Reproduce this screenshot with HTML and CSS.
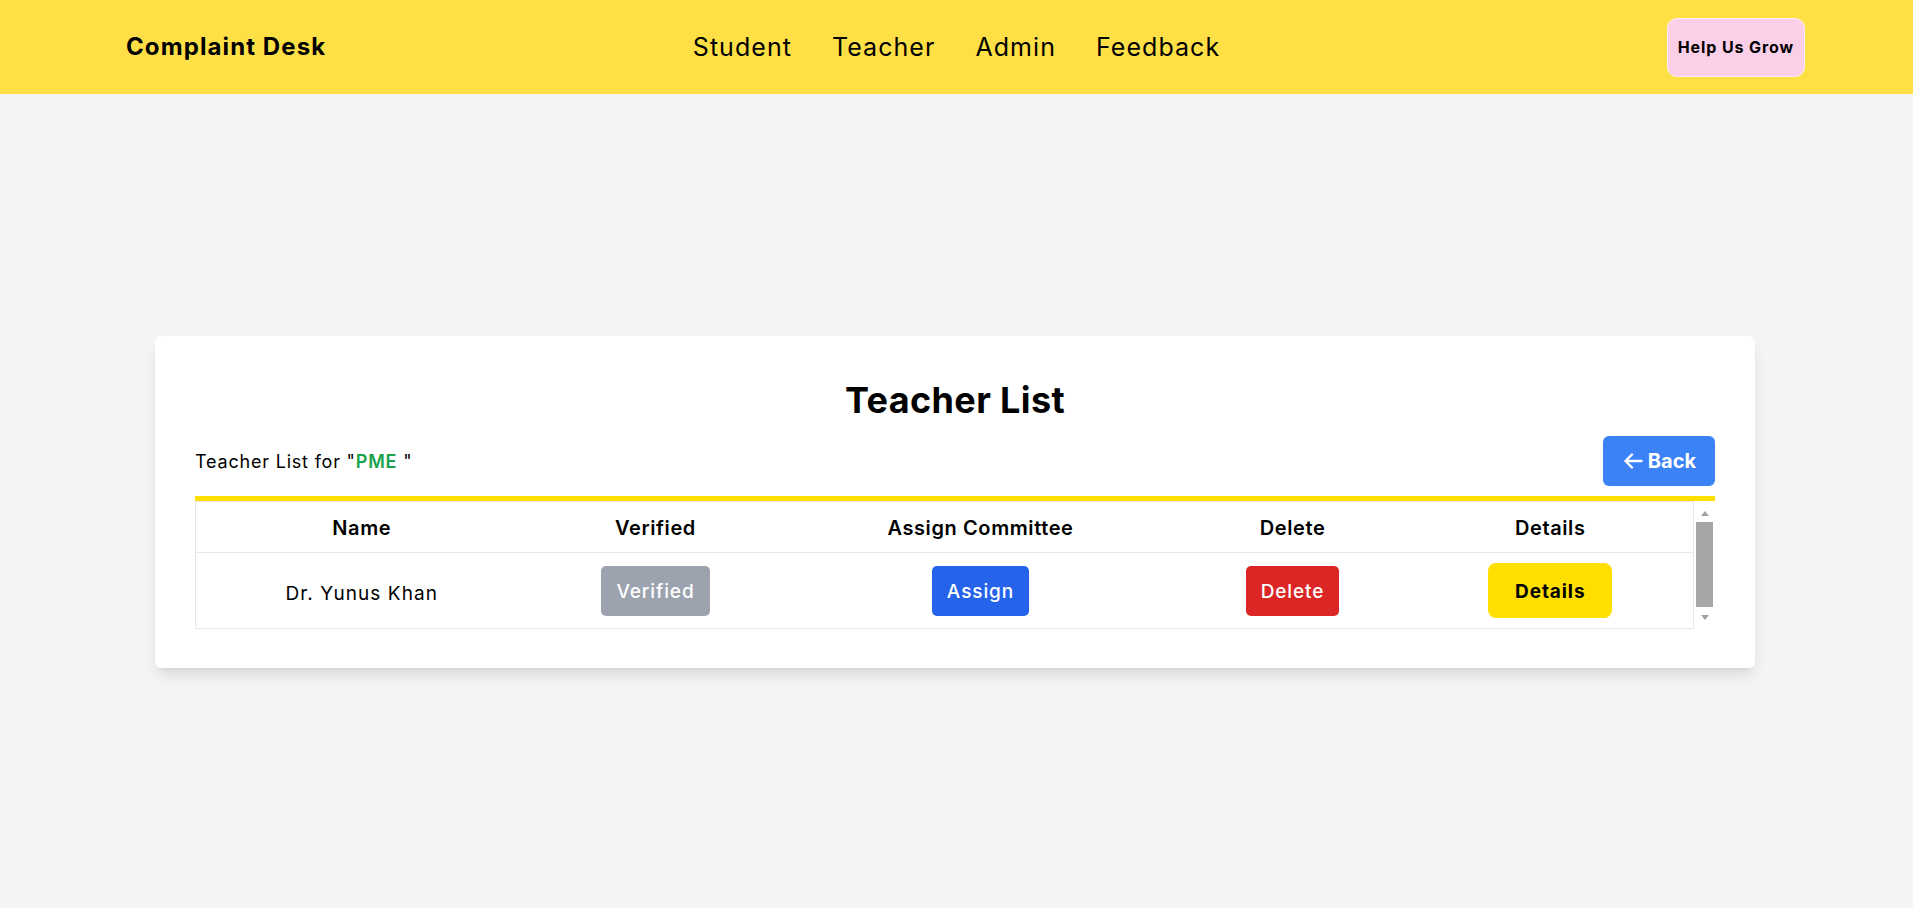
FILE: index.html
```html
<!DOCTYPE html>
<html lang="en">
<head>
<meta charset="utf-8">
<title>Complaint Desk</title>
<link rel="stylesheet" href="styles.css">
</head>
<body>
<header class="topbar">
  <div class="brand">Complaint Desk</div>
  <nav class="nav">
    <a class="nav-link" href="#">Student</a>
    <a class="nav-link" href="#">Teacher</a>
    <a class="nav-link" href="#">Admin</a>
    <a class="nav-link" href="#">Feedback</a>
  </nav>
  <div class="actions">
    <button class="grow-btn" type="button">Help Us Grow</button>
  </div>
</header>
<main class="page">
  <section class="card">
    <h1 class="card-title">Teacher List</h1>
    <div class="card-bar">
      <p class="subtitle">Teacher List for "<span class="dept">PME</span> "</p>
      <button class="back-btn" type="button">
        <svg class="back-icon" width="20" height="16" viewBox="0 0 20 16" aria-hidden="true"><path d="M9 1.5 L2.5 8 L9 14.5 M2.5 8 H18.5" fill="none" stroke="#fff" stroke-width="2.4" stroke-linecap="round" stroke-linejoin="round"/></svg>
        <span>Back</span>
      </button>
    </div>
    <div class="table-wrap">
      <div class="table-scroll">
        <table class="teacher-table">
          <thead>
            <tr>
              <th class="col-name">Name</th>
              <th class="col-verified">Verified</th>
              <th class="col-assign">Assign Committee</th>
              <th class="col-delete">Delete</th>
              <th class="col-details">Details</th>
            </tr>
          </thead>
          <tbody>
            <tr>
              <td class="cell-name">Dr. Yunus Khan</td>
              <td><button class="btn btn-gray" type="button">Verified</button></td>
              <td><button class="btn btn-blue" type="button">Assign</button></td>
              <td><button class="btn btn-red" type="button">Delete</button></td>
              <td><button class="btn-details" type="button">Details</button></td>
            </tr>
          </tbody>
        </table>
      </div>
      <div class="scrollbar" aria-hidden="true">
        <span class="sb-arrow sb-up"></span>
        <span class="sb-thumb"></span>
        <span class="sb-arrow sb-down"></span>
      </div>
    </div>
  </section>
</main>
</body>
</html>
```
FILE: styles.css
```css
* { box-sizing: border-box; }

html, body { margin: 0; padding: 0; }

body {
  background: #f3f4f6;
  font-family: Inter, "Noto Sans", "DejaVu Sans", sans-serif;
  color: #000;
  letter-spacing: 0.04em;
}

button { font-family: inherit; letter-spacing: inherit; cursor: pointer; }

/* ---------- top bar ---------- */
.topbar {
  height: 94px;
  background: #fee046;
  display: grid;
  grid-template-columns: 1fr auto 1fr;
  align-items: center;
  padding: 0 108px;
}

.brand {
  padding-left: 18px;
  font-size: 24px;
  line-height: 32px;
  font-weight: 700;
  letter-spacing: 1.1px;
}

.nav { display: flex; gap: 40px; }

.nav-link {
  color: #000;
  text-decoration: none;
  font-size: 25px;
  line-height: 32px;
  letter-spacing: 1.05px;
}

.actions { display: flex; justify-content: flex-end; }

.grow-btn {
  background: #fbcfe8;
  border: 1px solid #fdeef6;
  border-radius: 10px;
  padding: 16px 10px;
  font-size: 16px;
  line-height: 25px;
  font-weight: 700;
  color: #000;
  letter-spacing: 0.9px;
}

/* ---------- page ---------- */
.page {
  min-height: calc(100vh - 94px);
  display: flex;
  align-items: center;
  justify-content: center;
  padding: 2px 3px 0 0;
}

.card {
  width: 1600px;
  background: #fff;
  border-radius: 6px;
  padding: 40px 40px 39px;
  box-shadow: 0 10px 15px -3px rgba(0, 0, 0, 0.1), 0 4px 6px -4px rgba(0, 0, 0, 0.1);
}

.card-title {
  margin: 0;
  padding-top: 4px;
  height: 40px;
  text-align: center;
  font-size: 36px;
  line-height: 40px;
  font-weight: 700;
  letter-spacing: 0.01em;
}

.card-bar {
  margin-top: 20px;
  display: flex;
  align-items: center;
  justify-content: space-between;
}

.subtitle {
  margin: 0;
  font-size: 18px;
  line-height: 27px;
  padding-top: 1px;
  letter-spacing: 0.8px;
}

.dept { color: #16a34a; font-weight: 600; }

.back-btn {
  height: 50px;
  display: inline-flex;
  align-items: center;
  gap: 5px;
  padding: 0 19px 0 20px;
  background: #3b82f6;
  color: #fff;
  border: none;
  border-radius: 6px;
  font-size: 20px;
  font-weight: 700;
  letter-spacing: 0;
}

.back-icon { display: block; }

/* ---------- table ---------- */
.table-wrap {
  margin-top: 10px;
  border-top: 5px solid #ffdf00;
  display: flex;
}

.table-scroll {
  flex: 1;
  min-width: 0;
  overflow: hidden;
}

.scrollbar {
  width: 21px;
  flex: none;
  display: flex;
  flex-direction: column;
  align-items: center;
  background: #fff;
}

.sb-arrow {
  display: block;
  width: 0;
  height: 0;
  border-left: 4.5px solid transparent;
  border-right: 4.5px solid transparent;
}

.sb-up {
  margin-top: 10px;
  border-bottom: 5px solid #a3a3a3;
}

.sb-thumb {
  display: block;
  width: 17px;
  height: 85px;
  margin-top: 6px;
  background: #a6a6a6;
}

.sb-down {
  margin-top: 8px;
  border-top: 5px solid #a3a3a3;
}

.teacher-table {
  width: 100%;
  table-layout: fixed;
  border-collapse: collapse;
  border: 1px solid #e5e7eb;
}

.col-name { width: 332px; }
.col-verified { width: 256px; }
.col-assign { width: 394px; }
.col-delete { width: 230px; }

.teacher-table th {
  padding: 11px 8px 9px;
  font-size: 20px;
  line-height: 30px;
  font-weight: 600;
  text-align: center;
  border-bottom: 1px solid #e5e7eb;
  letter-spacing: 0.6px;
}

.teacher-table td {
  padding: 10px 8px;
  text-align: center;
  vertical-align: middle;
  font-size: 19px;
  line-height: 27px;
  border-bottom: 1px solid #e5e7eb;
  letter-spacing: 1.07px;
}

.teacher-table td.cell-name { padding-top: 15px; }

.btn {
  height: 50px;
  padding: 2px 15px 0;
  border: none;
  border-radius: 5px;
  color: #fff;
  font-size: 19px;
  font-weight: 500;
  letter-spacing: 0.9px;
}

.btn-gray { background: #9ca3af; }
.btn-blue { background: #2563eb; }
.btn-red { background: #dc2626; }

.btn-details {
  height: 55px;
  padding: 2px 27px 0;
  border: none;
  border-radius: 8px;
  background: #ffdf00;
  color: #000;
  font-size: 19px;
  font-weight: 700;
  letter-spacing: 0.9px;
}
```
